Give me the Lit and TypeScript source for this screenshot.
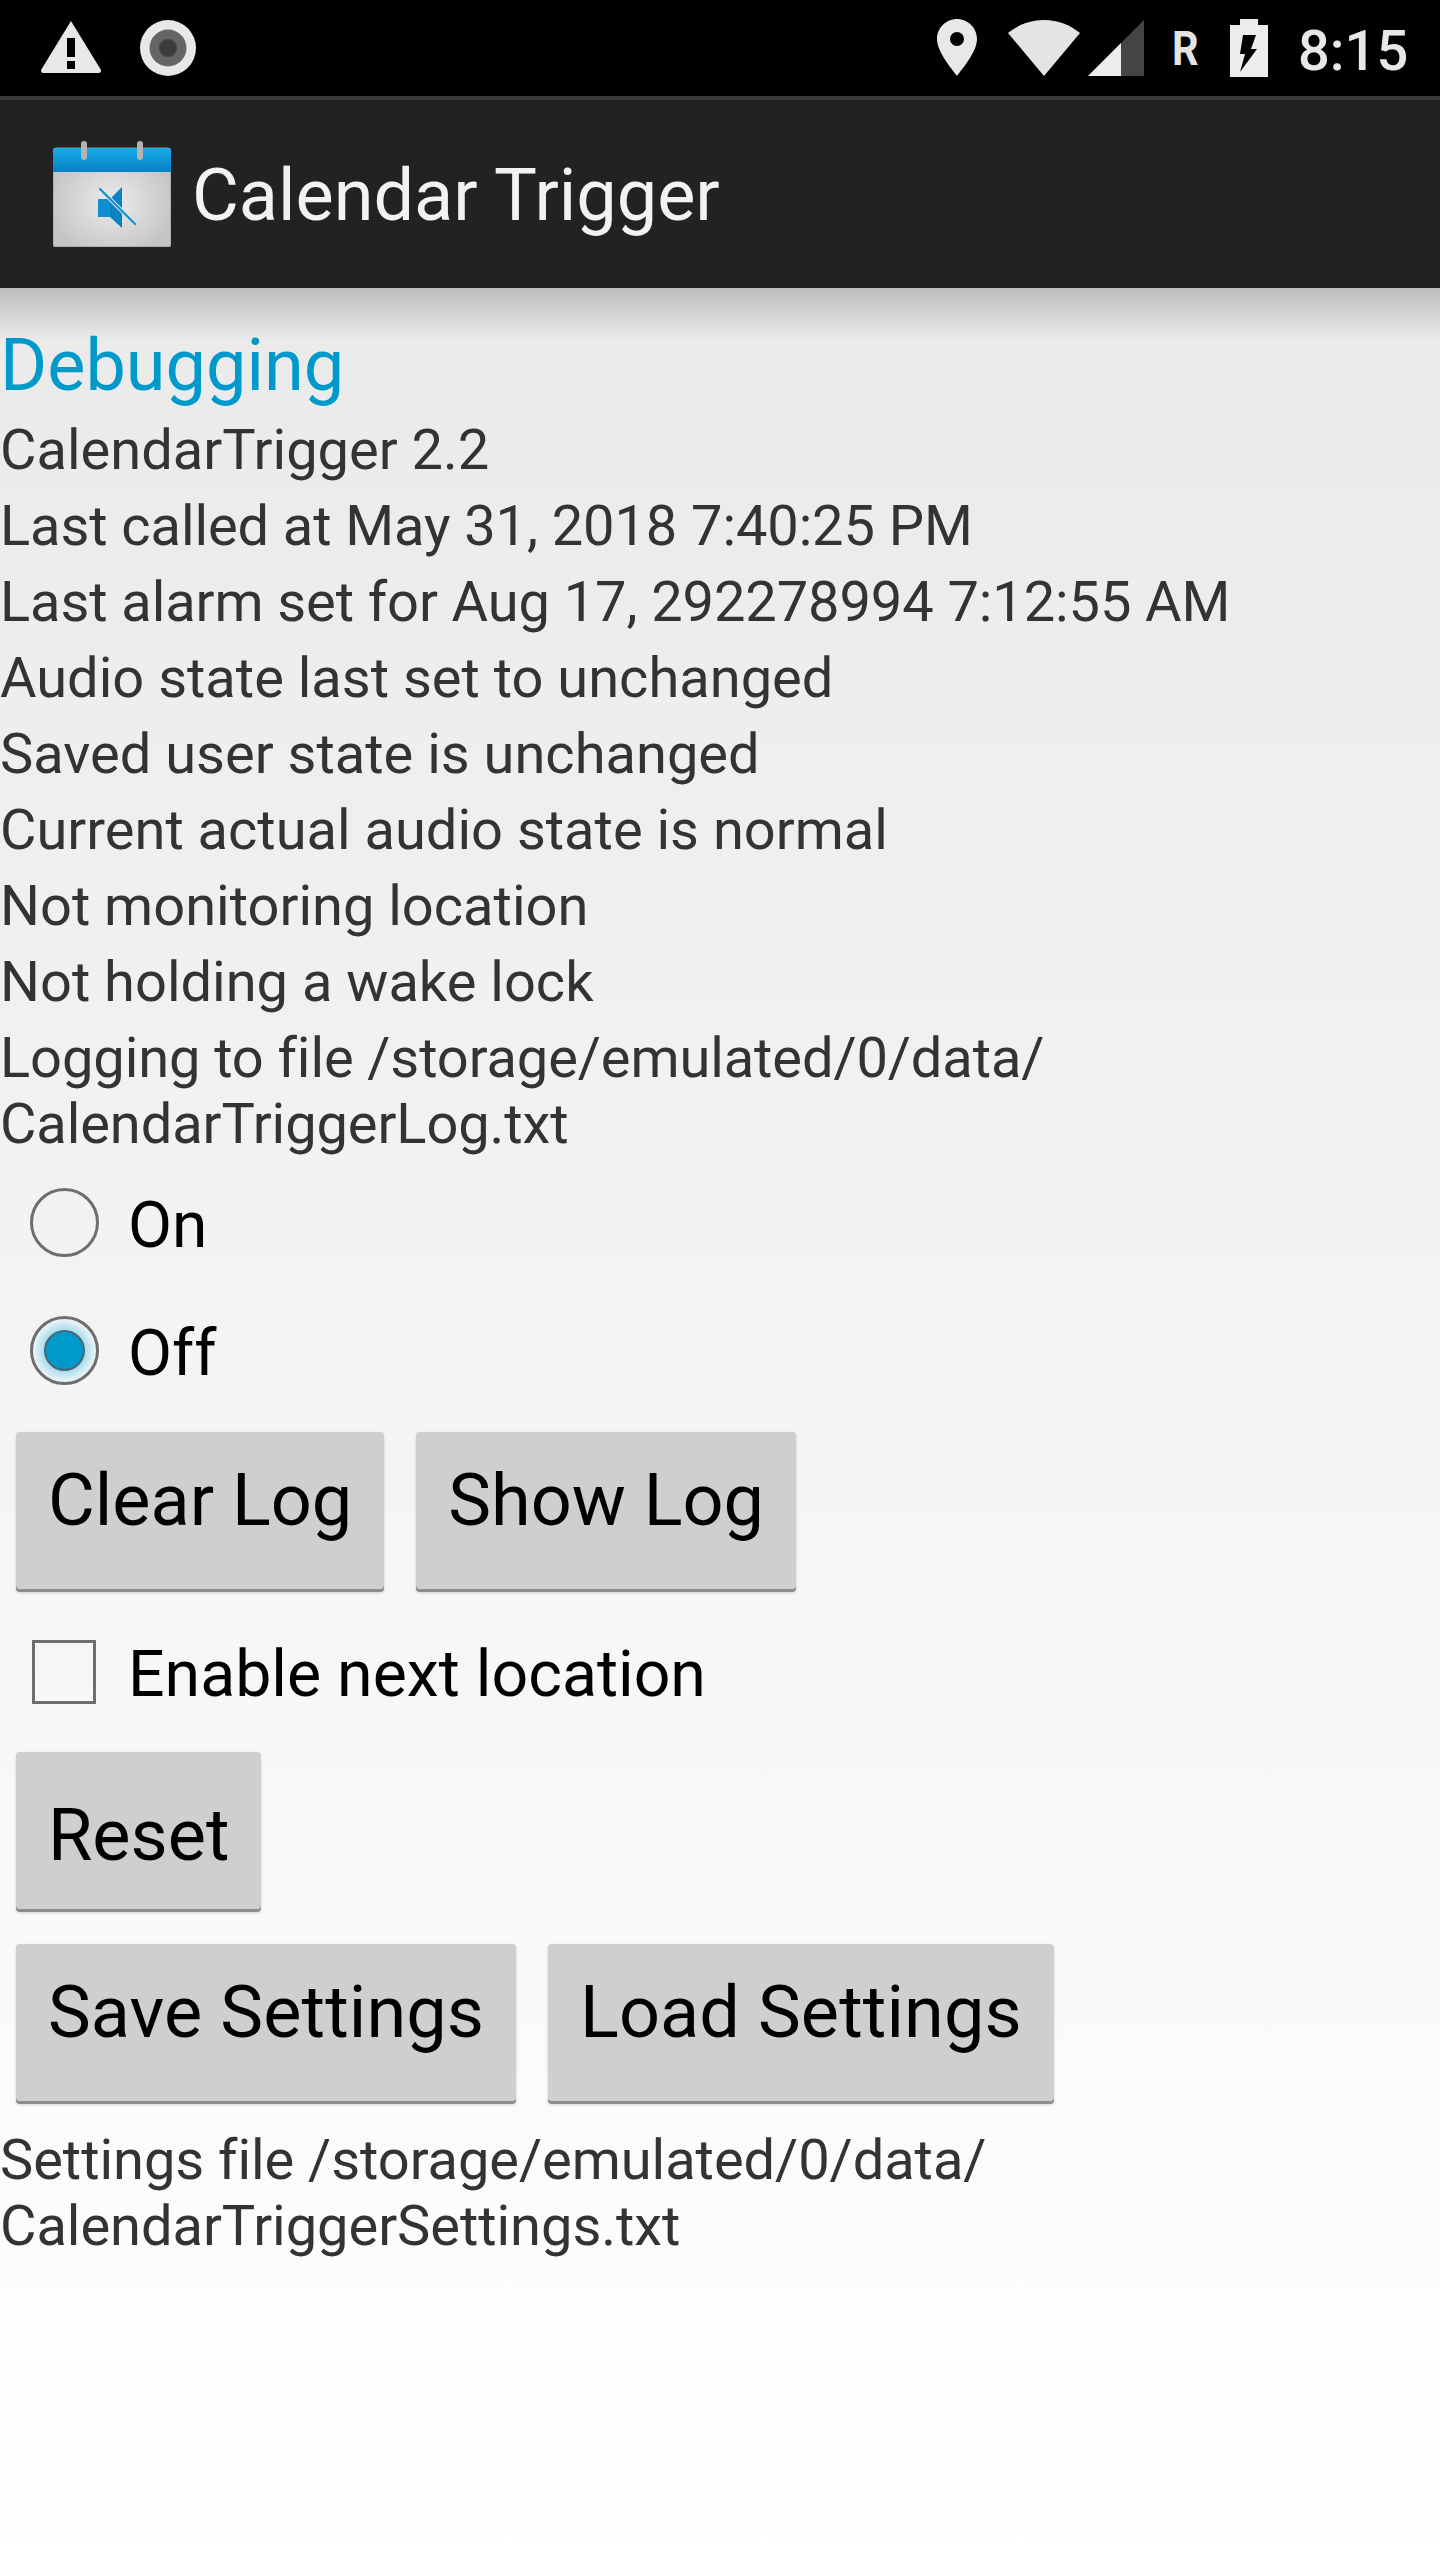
import { LitElement, html, css } from "lit";
import { customElement } from "lit/decorators.js";

@customElement("app-root")
export class AppRoot extends LitElement {
  static styles = css`
    :host { display: block; width: 1440px; height: 2560px; font-family: Roboto, sans-serif; overflow: hidden; background: #fff; }
    .status { height: 96px; background: #000; display: flex; align-items: flex-start; position: relative; }
    .status svg { display: block; flex: none; }
    .warn { margin: 21px 0 0 41px; }
    .rec { margin: 20px 0 0 39px; }
    .pin { margin: 19px 0 0 741px; }
    .wifi { margin: 20px 0 0 31px; }
    .sig { margin: 20px 0 0 8px; }
    .roam { margin: 21px 0 0 28px; width: 28px; font-size: 49px; line-height: 56px; font-weight: 700; color: #e4e4e4; transform: scaleX(.85); transform-origin: left center; }
    .batt { margin: 19px 0 0 30px; }
    .clock { margin: 18px 0 0 30px; font-size: 56px; line-height: 66px; font-weight: 500; color: #e8e8e8; }
    .bar { height: 192px; background: #222; border-top: 4px solid #3a3a3a; box-sizing: border-box; display: flex; align-items: center; }
    .logo { display: block; margin: 0 0 0 53px; flex: none; }
    .title { margin: 3px 0 0 21px; font-size: 72px; color: #f2f2f2; line-height: 84px; }
    .content { position: relative; height: 2272px; box-sizing: border-box; padding-top: 37px;
      background: linear-gradient(#eaeaea, #ffffff); }
    .shade { position: absolute; left: 0; right: 0; top: 0; height: 52px; background: linear-gradient(rgba(120,120,120,.4), rgba(120,120,120,0)); }
    h1 { margin: 0; font-size: 72px; font-weight: 400; line-height: 82px; color: #0099cc; }
    p { margin: 10.5px 0 0; font-size: 56px; line-height: 65.6px; color: #333; white-space: nowrap; }
    .tight { letter-spacing: -0.09px; }
    .tight2 { letter-spacing: -0.04px; }
    .options { margin-top: 1px; }
    .option { height: 128px; display: flex; align-items: center; padding-left: 30px; font-size: 64px; color: #000; }
    .option .lbl { margin-left: 29px; padding-top: 7px; }
    .radio { width: 69px; height: 69px; border-radius: 50%; border: 3px solid #6e6e6e; box-sizing: border-box; flex: none; display: flex; align-items: center; justify-content: center; }
    .radio.on { background: radial-gradient(circle closest-side, #9fd8ee 60%, #eef5f8 100%); }
    .dot { width: 41px; height: 41px; border-radius: 50%; background: #0099cc; border: 2px solid #4a6672; box-sizing: border-box; }
    .check { width: 64px; height: 64px; border: 3px solid #6e6e6e; box-sizing: border-box; margin-left: 2px; margin-right: 32px; flex: none; }
    .check-row { margin: 16px 0; }
    .check-row .lbl0 { padding-top: 4px; font-size: 64.4px; }
    .buttons { display: flex; gap: 32px; padding-left: 16px; }
    .b1 { margin-top: 18px; }
    .b3 { margin-top: 32px; letter-spacing: 0.1px; }
    .btn { height: 160px; box-sizing: border-box; padding: 27px 32px 0; background: #cfcfcf; border-radius: 4px; font-size: 72px; line-height: 84px; color: #000;
      box-shadow: inset 0 -3px 0 #8e8e8e, 0 1px 3px rgba(0,0,0,.15); }
    .btn.low { padding-top: 42px; }
    .settings { margin-top: 24px; }
  `;

  render() {
    return html`
      <div class="status">
        <svg class="warn" width="60" height="52" viewBox="0 0 60 52"><path fill="#e8e8e8" d="M30 0 L60 49 Q60 52 58 52 L2 52 Q0 52 0 49 Z"/><rect x="26" y="17" width="8" height="19" fill="#000"/><rect x="26" y="40" width="8" height="8" fill="#000"/></svg>
        <svg class="rec" width="56" height="56" viewBox="0 0 56 56"><circle cx="28" cy="28" r="28" fill="#e8e8e8"/><circle cx="28" cy="28" r="18.5" fill="#666"/><circle cx="28" cy="28" r="9" fill="#3c3c3c"/></svg>
        <svg class="pin" width="40" height="57" viewBox="0 0 40 57"><path fill-rule="evenodd" fill="#e8e8e8" d="M20 0 C31 0 40 9 40 20 C40 33 25 50 20 57 C15 50 0 33 0 20 C0 9 9 0 20 0 Z M20 13 A7 7 0 1 0 20 27 A7 7 0 1 0 20 13 Z"/></svg>
        <svg class="wifi" width="72" height="56" viewBox="0 0 72 56"><path fill="#e4e4e4" d="M36 56 L0 13 C10 5 22 0 36 0 C50 0 62 5 72 13 Z"/></svg>
        <svg class="sig" width="56" height="56" viewBox="0 0 56 56"><path fill="#444" d="M56 0 V56 H0 Z"/><path fill="#ececec" d="M33 23 V56 H0 Z"/></svg>
        <div class="roam">R</div>
        <svg class="batt" width="38" height="58" viewBox="0 0 38 58"><path fill="#ececec" d="M10 0 H28 V6 H38 V58 H0 V6 H10 Z"/><path fill="#000" d="M13 16 H26 L21 30 H27 L10 53 L15 35 H10 Z"/></svg>
        <div class="clock">8:15</div>
      </div>
      <div class="bar">
        <svg class="logo" width="118" height="106" viewBox="0 0 118 106">
          <defs>
            <linearGradient id="lb" x1="0" y1="0" x2="0" y2="1"><stop offset="0" stop-color="#18abe6"/><stop offset="1" stop-color="#0481c7"/></linearGradient>
            <radialGradient id="lg" cx=".5" cy=".55" r=".55"><stop offset="0" stop-color="#ececec"/><stop offset="1" stop-color="#c5c5c5"/></radialGradient>
          </defs>
          <rect x="0" y="7" width="118" height="99" rx="3" fill="url(#lg)" stroke="#999" stroke-width="1"/>
          <path d="M0 10 Q0 7 3 7 H115 Q118 7 118 10 V31 H0 Z" fill="url(#lb)"/>
          <rect x="28" y="0" width="6" height="19" rx="3" fill="#b4b4b4"/>
          <rect x="84" y="0" width="6" height="19" rx="3" fill="#b4b4b4"/>
          <rect x="45" y="58" width="12" height="18" fill="#0f8fcf"/>
          <path d="M57 58 L69 46 V87 L57 76 Z" fill="#0a82c2"/>
          <path d="M47 48 L82 83" stroke="#e4e4e4" stroke-width="4"/>
          <path d="M47 48 L82 83" stroke="#1a93d0" stroke-width="2.4" stroke-linecap="round"/>
        </svg>
        <div class="title">Calendar Trigger</div>
      </div>
      <div class="content">
        <div class="shade"></div>
        <h1>Debugging</h1>
        <p>CalendarTrigger 2.2</p>
        <p class="tight">Last called at May 31, 2018 7:40:25 PM</p>
        <p class="tight">Last alarm set for Aug 17, 292278994 7:12:55 AM</p>
        <p>Audio state last set to unchanged</p>
        <p>Saved user state is unchanged</p>
        <p>Current actual audio state is normal</p>
        <p>Not monitoring location</p>
        <p>Not holding a wake lock</p>
        <p class="tight">Logging to file /storage/emulated/0/data/<br>CalendarTriggerLog.txt</p>
        <div class="options">
          <div class="option"><span class="radio"></span><span class="lbl">On</span></div>
          <div class="option"><span class="radio on"><span class="dot"></span></span><span class="lbl">Off</span></div>
        </div>
        <div class="buttons b1"><div class="btn">Clear Log</div><div class="btn">Show Log</div></div>
        <div class="option check-row"><span class="check"></span><span class="lbl0">Enable next location</span></div>
        <div class="buttons"><div class="btn low">Reset</div></div>
        <div class="buttons b3"><div class="btn">Save Settings</div><div class="btn">Load Settings</div></div>
        <p class="settings tight2">Settings file /storage/emulated/0/data/<br>CalendarTriggerSettings.txt</p>
      </div>
    `;
  }
}
